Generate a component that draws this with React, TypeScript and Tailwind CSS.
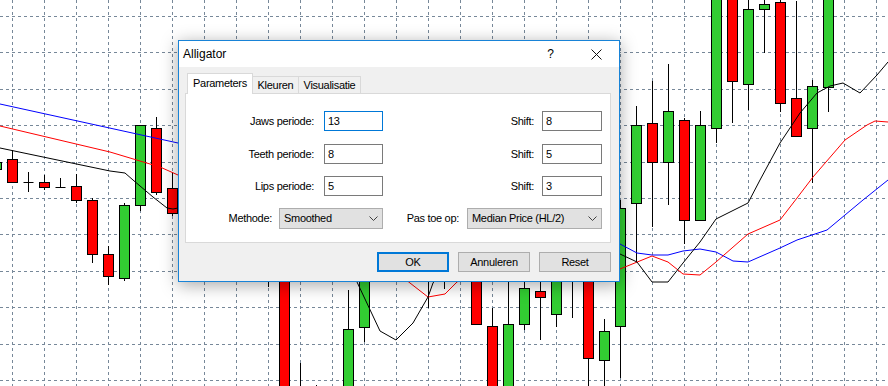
const GRID = "#778899";

// k, wickTop, bodyTop, bodyBottom, wickBottom, bullish
const candles: [number, number, number, number, number, boolean][] = [
  [-1, 158, 162, 169, 172, true],
  [0, 150, 159, 182, 182, false],
  [1, 172, 182, 182, 192, false],
  [2, 175, 182, 187, 190, false],
  [3, 178, 187, 187, 187, false],
  [4, 174, 186, 200, 203, false],
  [5, 198, 200, 254, 263, false],
  [6, 246, 254, 276, 285, false],
  [7, 203, 205, 278, 281, true],
  [8, 125, 125, 205, 211, true],
  [9, 117, 128, 192, 195, false],
  [10, 172, 188, 213, 216, false],
  [16, 230, 240, 270, 287, false],
  [17, 240, 250, 400, 400, false],
  [18, 363, 390, 420, 420, true],
  [19, 385, 392, 420, 420, true],
  [21, 290, 329, 400, 400, true],
  [22, 240, 250, 327, 342, true],
  [26, 230, 240, 270, 308, false],
  [27, 230, 240, 270, 289, false],
  [29, 240, 250, 324, 324, false],
  [30, 308, 326, 400, 400, false],
  [31, 240, 324, 400, 400, true],
  [32, 280, 288, 324, 330, true],
  [33, 282, 291, 297, 340, false],
  [34, 240, 250, 314, 327, true],
  [35, 230, 240, 270, 318, false],
  [36, 240, 250, 358, 400, false],
  [37, 319, 331, 360, 400, true],
  [38, 200, 208, 326, 378, true],
  [39, 106, 125, 203, 262, true],
  [40, 81, 123, 162, 227, false],
  [41, 64, 111, 162, 205, true],
  [42, 118, 120, 220, 244, false],
  [43, 111, 125, 220, 220, true],
  [44, -10, -10, 128, 143, true],
  [45, -10, -10, 81, 123, false],
  [46, -10, 9, 84, 110, true],
  [47, -10, 4, 9, 53, true],
  [48, -10, 2, 103, 112, false],
  [49, 1, 98, 136, 136, false],
  [50, 80, 86, 128, 183, true],
  [51, -10, -10, 87, 112, true],
];

const blue = "0,104 178,143 400,200 620,244 637,253 652,255 668,255 683,251 700,249 716,252 733,261 748,262 780,248 797,240 827,230 845,215 863,200 888,180";
const red = "0,126 110,152 160,167 178,175 380,260 400,275 410,283 428,297 445,294 457,282 470,274 620,269 652,256 668,262 683,274 700,275 716,262 748,234 780,220 797,198 813,177 845,140 867,125 875,121 888,122";
const black = "0,148 110,171 125,173 133,180 153,197 167,208 173,209 178,208 340,255 357,282 380,331 396,340 413,323 428,297 433,283 450,260 620,254 637,262 652,282 668,282 683,263 700,242 716,219 748,203 760,180 780,143 800,113 817,93 830,86 843,83 860,93 877,75 888,62";

function Chart() {
  const vlines = Array.from({ length: 28 }, (_, i) => 12.5 + 32 * i);
  const hlines = Array.from({ length: 11 }, (_, i) => Math.round(16 + 36.4 * i) + 0.5);
  return (
    <svg width="888" height="386" className="block">
      {vlines.map((x) => (
        <line key={"v" + x} x1={x} y1={0} x2={x} y2={386} stroke={GRID} strokeDasharray="3 3" />
      ))}
      {hlines.map((y) => (
        <line key={"h" + y} x1={0} y1={y} x2={888} y2={y} stroke={GRID} strokeDasharray="3 3" />
      ))}
      {candles.map(([k, wt, bt, bb, wb, up]) => {
        const x = 12.5 + 16 * k;
        return (
          <g key={k}>
            <line x1={x} y1={wt} x2={x} y2={wb} stroke="#000" />
            {bt === bb ? (
              <line x1={x - 5} y1={bt + 0.5} x2={x + 5} y2={bt + 0.5} stroke="#000" />
            ) : (
              <rect
                x={x - 5}
                y={bt + 0.5}
                width={10}
                height={bb - bt}
                fill={up ? "#32cd32" : "#ff0000"}
                stroke="#000"
              />
            )}
          </g>
        );
      })}
      <polyline points={blue} fill="none" stroke="#0000ff" />
      <polyline points={red} fill="none" stroke="#ff0000" />
      <polyline points={black} fill="none" stroke="#000" />
    </svg>
  );
}

function Field({ value, focused }: { value: string; focused?: boolean }) {
  return (
    <div
      className={`h-[20px] flex items-center pl-[3px] bg-white border ${
        focused ? "border-[#0078d7]" : "border-[#7a7a7a]"
      }`}
    >
      {value}
    </div>
  );
}

function Select({ value }: { value: string }) {
  return (
    <div className="h-[21px] flex items-center justify-between pl-[4px] pr-[4px] bg-[#e1e1e1] border border-[#adadad]">
      <span>{value}</span>
      <svg width="9" height="5" viewBox="0 0 9 5">
        <path d="M0.5 0.5 L4.5 4.5 L8.5 0.5" fill="none" stroke="#404040" />
      </svg>
    </div>
  );
}

function Row({ label, value, shift, focused }: { label: string; value: string; shift: string; focused?: boolean }) {
  return (
    <div className="flex items-center h-[20px]">
      <span className="w-[128px] text-right">{label}</span>
      <div className="ml-[10px] w-[59px]">
        <Field value={value} focused={focused} />
      </div>
      <span className="w-[151px] text-right">Shift:</span>
      <div className="ml-[8px] w-[60px]">
        <Field value={shift} />
      </div>
    </div>
  );
}

function Button({ label, primary }: { label: string; primary?: boolean }) {
  return (
    <div
      className={`w-[72px] h-[20px] flex items-center justify-center bg-[#e1e1e1] ${
        primary ? "border-2 border-[#0078d7]" : "border border-[#adadad]"
      }`}
    >
      {label}
    </div>
  );
}

function Dialog() {
  return (
    <div className="absolute left-[178px] top-[40px] w-[442px] h-[242px] flex flex-col bg-[#f0f0f0] border border-[#1883d7] shadow-[0_3px_16px_rgba(0,0,0,0.35)] text-black text-[11px] tracking-[-0.3px] font-['Liberation_Sans',Arial,sans-serif]">
      {/* Title bar */}
      <div className="h-[26px] flex items-center bg-white">
        <span className="pl-[4px] text-[12px] tracking-normal">Alligator</span>
        <span className="ml-auto w-[45px] text-center text-[12px]">?</span>
        <span className="w-[46px] flex justify-center">
          <svg width="11" height="11" viewBox="0 0 11 11">
            <path d="M0.5 0.5 L10.5 10.5 M10.5 0.5 L0.5 10.5" stroke="#111" />
          </svg>
        </span>
      </div>

      <div className="flex-1 flex flex-col pl-[6px] pr-[8px] pt-[6px]">
        {/* Tabs */}
        <div className="flex items-end h-[20px] pl-[2px]">
          <div className="relative z-10 -mb-px h-[21px] w-[66px] flex items-center justify-center pb-px bg-white border-t border-l border-r border-[#d9d9d9]">
            Parameters
          </div>
          <div className="h-[17px] w-[46px] flex items-center justify-center border-t border-r border-[#d9d9d9]">
            Kleuren
          </div>
          <div className="h-[17px] w-[62px] flex items-center justify-center border-t border-r border-[#d9d9d9]">
            Visualisatie
          </div>
        </div>

        {/* Panel */}
        <div className="h-[150px] flex flex-col pt-[17px] bg-white border border-[#d9d9d9]">
          <Row label="Jaws periode:" value="13" shift="8" focused />
          <div className="mt-[13px]">
            <Row label="Teeth periode:" value="8" shift="5" />
          </div>
          <div className="mt-[12px]">
            <Row label="Lips periode:" value="5" shift="3" />
          </div>
          <div className="mt-[12px] flex items-center">
            <span className="w-[86px] text-right">Methode:</span>
            <div className="ml-[7px] w-[104px]">
              <Select value="Smoothed" />
            </div>
            <span className="w-[76px] text-right">Pas toe op:</span>
            <div className="ml-[8px] w-[135px]">
              <Select value="Median Price (HL/2)" />
            </div>
          </div>
        </div>

        {/* Buttons */}
        <div className="mt-[9px] flex justify-end gap-[9px]">
          <Button label="OK" primary />
          <Button label="Annuleren" />
          <Button label="Reset" />
        </div>
      </div>
    </div>
  );
}

export default function App() {
  return (
    <div className="relative w-[888px] h-[386px] overflow-hidden bg-white">
      <Chart />
      <Dialog />
    </div>
  );
}
